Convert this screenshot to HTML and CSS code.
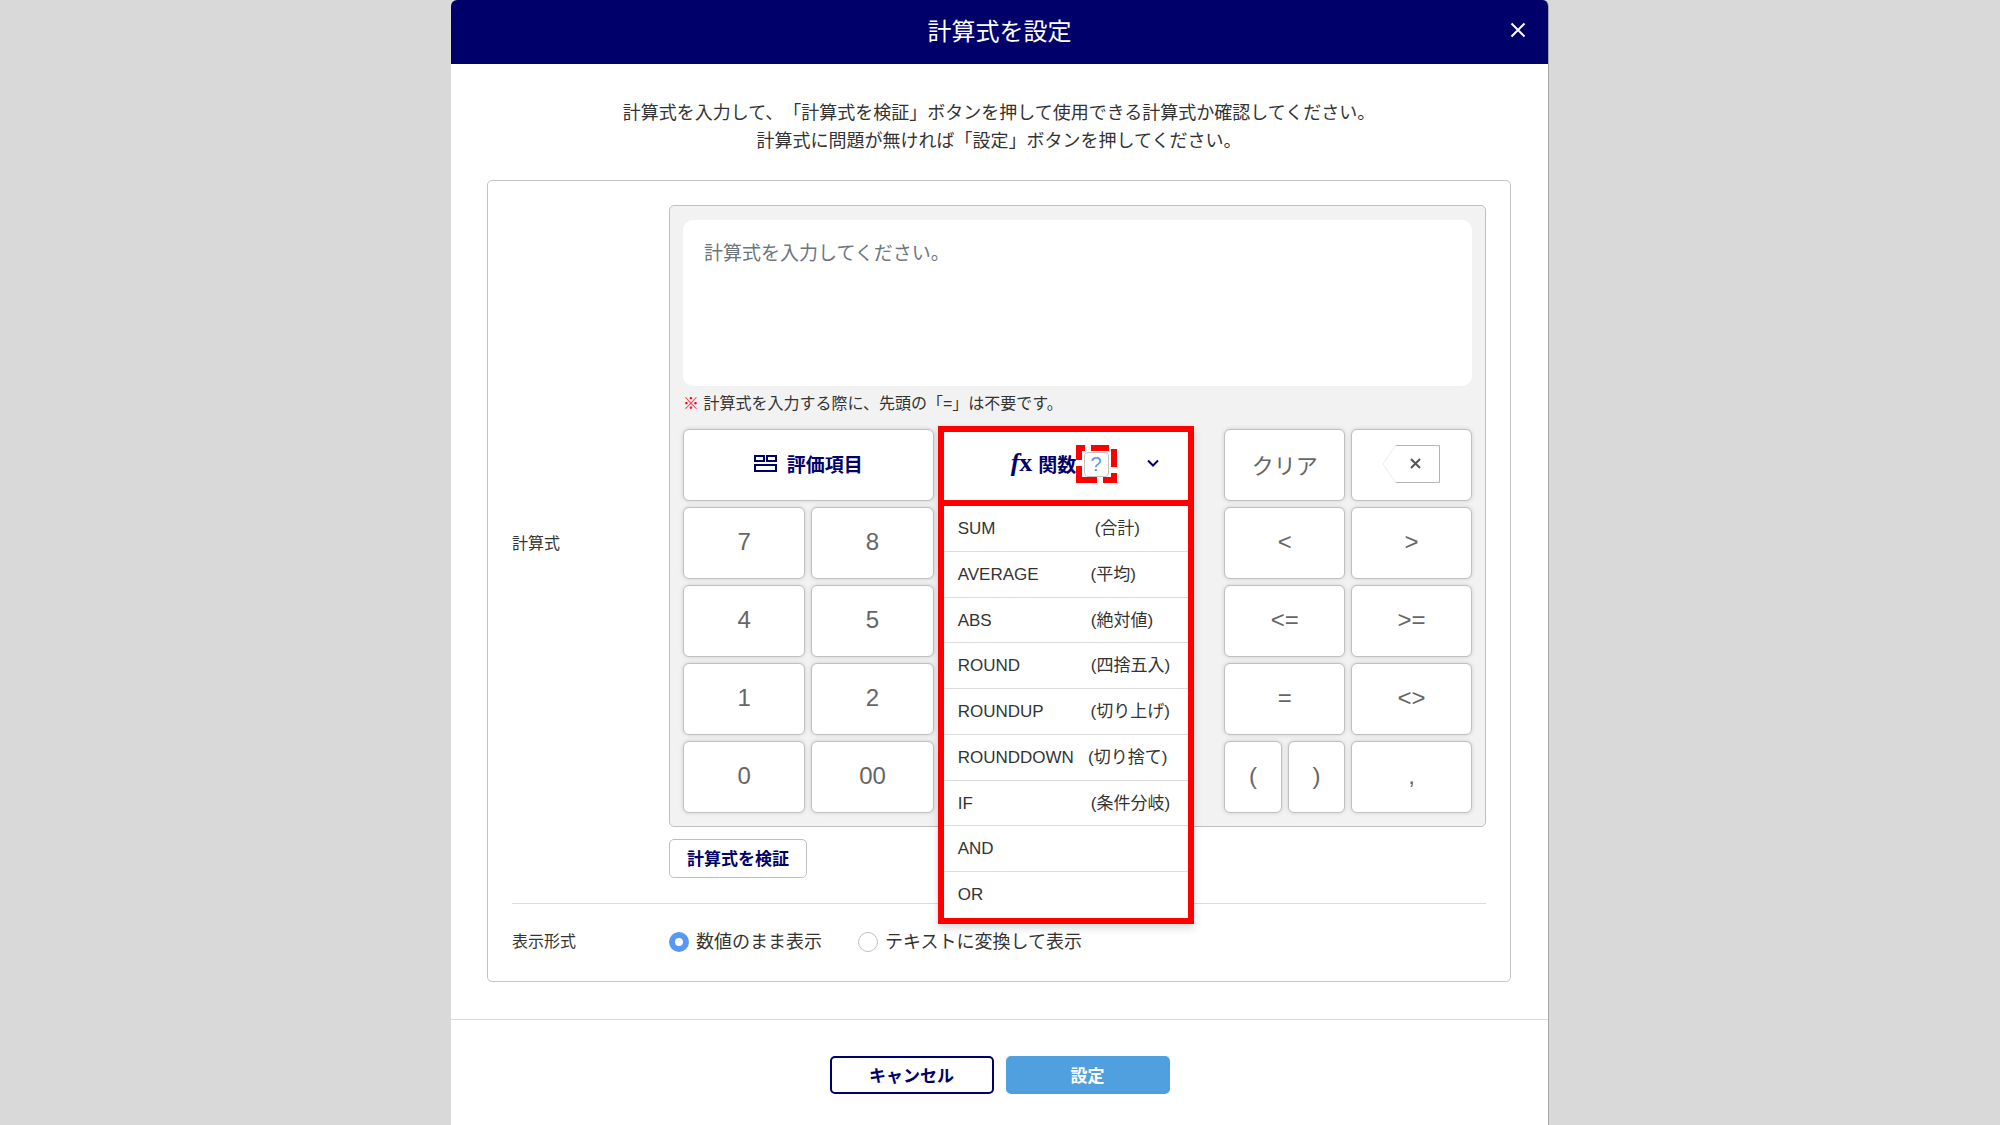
FILE: index.html
```html
<!DOCTYPE html>
<html lang="ja">

<head>
    <meta charset="UTF-8" />
    <meta name="viewport" content="width=device-width, initial-scale=1.0" />
    <title>計算式を設定</title>
    <link rel="stylesheet" href="styles.css">
</head>

<body>
    <div class="modal">
        <header class="modal-header">
            <h1>計算式を設定</h1>
            <button class="close" aria-label="閉じる">
                <svg width="16" height="16" viewBox="0 0 16 16"><path d="M1.500 1.500L14.500 14.500M14.500 1.500L1.500 14.500" /></svg>
            </button>
        </header>

        <main class="modal-body">
            <p class="intro">計算式を入力して、「計算式を検証」ボタンを押して使用できる計算式か確認してください。<br>計算式に問題が無ければ「設定」ボタンを押してください。</p>

            <div class="form-box">
                <div class="form-row">
                    <label class="row-label" for="formula">計算式</label>
                    <div class="row-content">
                        <div class="calculator">
                            <textarea id="formula" placeholder="計算式を入力してください。"></textarea>
                            <p class="note"><span class="mark">※</span> 計算式を入力する際に、先頭の「=」は不要です。</p>

                            <div class="pad">
                                <div class="keys numbers">
                                    <button class="key items">
                                        <svg width="23" height="17" viewBox="0 0 23 17"><path d="M1 1H10V6H1ZM13 1H22V6H13ZM1 10H22V16H1Z" /></svg>
                                        評価項目
                                    </button>
                                    <button class="key">7</button>
                                    <button class="key">8</button>
                                    <button class="key">4</button>
                                    <button class="key">5</button>
                                    <button class="key">1</button>
                                    <button class="key">2</button>
                                    <button class="key">0</button>
                                    <button class="key">00</button>
                                </div>

                                <div class="functions">
                                    <div class="dropdown">
                                        <div class="dropdown-head">
                                            <button class="toggle">
                                                <span class="fx"><i>f</i>x</span>
                                                関数
                                                <svg class="chevron" width="14" height="9" viewBox="0 0 14 9"><path d="M2 1.500L7 6.500L12 1.500" /></svg>
                                            </button>
                                            <div class="help">
                                                <svg class="dashes" width="41" height="38" viewBox="0 0 41 38"><path d="M0 3H9M15 3H33M38 4V22M38 28V38M41 35H27M21 35H0M3 38V21M3 15V0" /></svg>
                                                <button class="help-button">?</button>
                                            </div>
                                        </div>
                                        <!-- names are padded with spaces, see white-space: pre -->
                                        <ul class="menu">
                                            <li>SUM                     (合計)</li>
                                            <li>AVERAGE           (平均)</li>
                                            <li>ABS                     (絶対値)</li>
                                            <li>ROUND               (四捨五入)</li>
                                            <li>ROUNDUP          (切り上げ)</li>
                                            <li>ROUNDDOWN   (切り捨て)</li>
                                            <li>IF                         (条件分岐)</li>
                                            <li>AND</li>
                                            <li>OR</li>
                                        </ul>
                                    </div>
                                </div>

                                <div class="keys operators">
                                    <button class="key clear">クリア</button>
                                    <button class="key" aria-label="一文字削除">
                                        <svg class="backspace" width="60" height="40" viewBox="0 0 60 40">
                                            <path class="tip" d="M14 1L1 20L14 39" />
                                            <path class="edge" d="M14 1.500H57.500V38.500H14" />
                                            <path class="cross" d="M29 15L38 24M38 15L29 24" />
                                        </svg>
                                    </button>
                                    <button class="key">&lt;</button>
                                    <button class="key">&gt;</button>
                                    <button class="key">&lt;=</button>
                                    <button class="key">&gt;=</button>
                                    <button class="key">=</button>
                                    <button class="key">&lt;&gt;</button>
                                    <div class="brackets">
                                        <button class="key">(</button>
                                        <button class="key">)</button>
                                    </div>
                                    <button class="key">,</button>
                                </div>
                            </div>
                        </div>
                        <button class="verify">計算式を検証</button>
                    </div>
                </div>

                <div class="form-row format-row">
                    <span class="row-label">表示形式</span>
                    <div class="row-content radios">
                        <label><input type="radio" name="format" checked>数値のまま表示</label>
                        <label><input type="radio" name="format">テキストに変換して表示</label>
                    </div>
                </div>
            </div>
        </main>

        <footer class="modal-footer">
            <button class="cancel">キャンセル</button>
            <button class="submit">設定</button>
        </footer>
    </div>
</body>

</html>
```
FILE: styles.css
```css
* {
    box-sizing: border-box;
}

body {
    margin: 0;
    background-color: #d9d9d9;
    color: #333;
    font-family: "Liberation Sans", "Noto Sans CJK JP", sans-serif;
    font-size: 18px;
    text-spacing-trim: space-all;
}

button,
textarea {
    font-family: inherit;
    margin: 0;
    padding: 0;
}

button {
    cursor: pointer;
}

svg {
    fill: none;
    display: block;
}

.modal {
    max-width: 1098px;
    min-height: 100vh;
    margin: 0 auto;
    background-color: #fff;
    border-right: 1px solid #a6a6a6;
    border-radius: 6px 6px 0 0;
    overflow: hidden;
}

.modal-header {
    position: relative;
    height: 64px;
    padding-bottom: 5px;
    background-color: #00006b;
    color: #fff;
    display: flex;
    justify-content: center;
    align-items: center;
}

.modal-header h1 {
    margin: 0;
    font-size: 24px;
    font-weight: normal;
}

.close {
    position: absolute;
    top: 22px;
    right: 22px;
    border: 0;
    background: none;
}

.close svg {
    stroke: #fff;
    stroke-width: 2;
}

.modal-body {
    padding: 35px 37px 37px 36px;
}

.intro {
    margin: 0 0 25px;
    line-height: 28px;
    text-align: center;
}

.form-box {
    border: 1px solid #c4c4c4;
    border-radius: 5px;
    padding: 24px 24px 25px;
}

.form-row {
    display: flex;
    align-items: center;
}

.row-label {
    width: 157px;
    flex-shrink: 0;
    font-size: 16px;
}

.row-content {
    flex: 1;
}

.calculator {
    background-color: #f2f2f2;
    border: 1px solid #bfbfbf;
    border-radius: 5px;
    padding: 14px 13px 13px;
}

#formula {
    display: block;
    width: 100%;
    height: 166px;
    padding: 20px 21px;
    border: 0;
    border-radius: 10px;
    resize: none;
    font-size: 19px;
    line-height: 28px;
}

#formula::placeholder {
    color: #6c757d;
}

.note {
    margin: 6px 0 13px;
    font-size: 16px;
    line-height: 24px;
}

.mark {
    color: #ff0000;
}

.pad {
    display: grid;
    grid-template-columns: 251fr 283fr 248fr;
    gap: 4px;
}

.keys {
    display: grid;
    grid-template-columns: 1fr 1fr;
    grid-auto-rows: 72px;
    gap: 6px;
}

.key {
    background-color: #fff;
    border: 1px solid #c0c0c0;
    border-radius: 6px;
    box-shadow: 0 0 4px rgba(0, 0, 0, 0.15);
    color: #666;
    font-size: 24px;
    padding-bottom: 3px;
}

.items {
    grid-column: span 2;
    display: flex;
    justify-content: center;
    align-items: center;
    gap: 10px;
    color: #00006b;
    font-size: 19px;
    font-weight: bold;
}

.items svg {
    stroke: #00006b;
    stroke-width: 2;
}

.clear {
    font-size: 22px;
}

.brackets {
    display: grid;
    grid-template-columns: 1fr 1fr;
    gap: 6px;
}

.backspace {
    margin: 0 auto;
}

.tip {
    stroke: #ececec;
}

.edge {
    stroke: #b5b5b5;
}

.cross {
    stroke: #555;
    stroke-width: 2;
}

/* functions dropdown, opens over the keys */
.functions {
    position: relative;
}

.dropdown {
    position: absolute;
    top: -3px;
    left: 0;
    right: 26px;
    z-index: 1;
    border: 6px solid #ff0000;
    background-color: #fff;
    box-shadow: 0 4px 8px rgba(0, 0, 0, 0.15);
}

.dropdown-head {
    position: relative;
    border-bottom: 6px solid #ff0000;
}

.toggle {
    width: 100%;
    height: 68px;
    padding: 0 28px 6px 67px;
    border: 0;
    background: none;
    display: flex;
    align-items: center;
    gap: 6px;
    color: #00006b;
    font-size: 19px;
    font-weight: bold;
}

.fx {
    font-family: "Liberation Serif", serif;
    font-size: 26px;
}

.chevron {
    margin-left: auto;
    stroke: #00006b;
    stroke-width: 2;
}

.help {
    position: absolute;
    top: 13px;
    left: 132px;
    width: 41px;
    height: 38px;
    display: flex;
    justify-content: center;
    align-items: center;
}

.dashes {
    position: absolute;
    stroke: #ff0000;
    stroke-width: 6;
}

.help-button {
    width: 25px;
    height: 25px;
    border: 1px solid #c4c4c4;
    border-radius: 4px;
    background-color: #fff;
    color: #5897f5;
    font-size: 20px;
    line-height: 22px;
}

.menu {
    height: 412px;
    margin: 0;
    padding: 0;
    list-style: none;
    display: grid;
    grid-auto-rows: 1fr;
}

.menu li {
    padding: 3px 14px 0;
    border-bottom: 1px solid #dcdcdc;
    font-size: 17px;
    line-height: 40px;
    white-space: pre;
}

.menu li:last-child {
    border-bottom: 0;
}

.verify {
    display: block;
    height: 39px;
    margin-top: 12px;
    padding: 0 17px 2px;
    border: 1px solid #c0c0c0;
    border-radius: 5px;
    background-color: #fff;
    color: #00006b;
    font-size: 17px;
    font-weight: bold;
}

.format-row {
    margin-top: 25px;
    padding-top: 24px;
    border-top: 1px solid #dcdcdc;
    line-height: 28px;
}

.radios {
    display: flex;
    gap: 36px;
}

.radios label {
    display: flex;
    align-items: center;
    gap: 7px;
}

.radios input {
    appearance: none;
    width: 20px;
    height: 20px;
    margin: 0;
    border: 1px solid #c0c0c0;
    border-radius: 50%;
    background-color: #fff;
}

.radios input:checked {
    border: 6px solid #5897f5;
}

.modal-footer {
    border-top: 1px solid #dcdcdc;
    padding: 36px;
    display: flex;
    justify-content: center;
    gap: 12px;
}

.modal-footer button {
    width: 164px;
    height: 38px;
    padding-bottom: 2px;
    border: 2px solid #00006b;
    border-radius: 5px;
    background-color: #fff;
    color: #00006b;
    font-size: 17px;
    font-weight: bold;
}

.modal-footer .submit {
    border-color: #509fdf;
    background-color: #509fdf;
    color: #fff;
}
```
